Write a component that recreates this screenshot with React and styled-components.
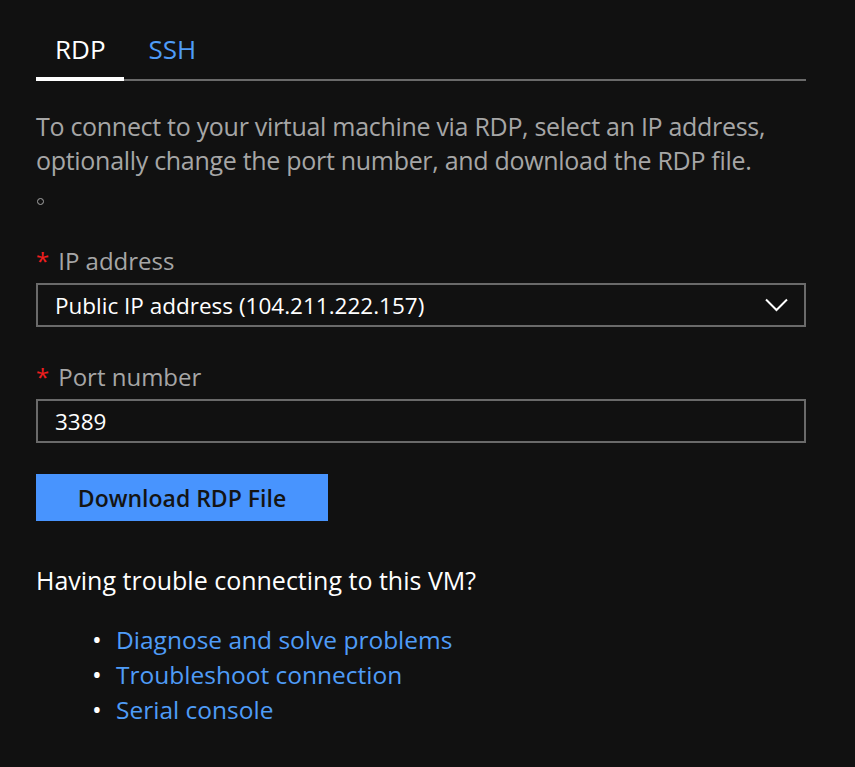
import React, { useState } from 'react'
import styled, { createGlobalStyle } from 'styled-components'

const GlobalStyle = createGlobalStyle`
  html, body {
    margin: 0;
    padding: 0;
    background: #111111;
  }
  body {
    font-family: "Open Sans", "Noto Sans", "Liberation Sans", sans-serif;
  }
`

const Panel = styled.div`
  width: 770px;
  padding: 25px 0 0 36px;
  color: #fff;
  min-height: 742px;
`

const Tabs = styled.div`
  display: flex;
  gap: 6px;
  border-bottom: 2px solid #6a6a6a;
`

const Tab = styled.div`
  font-size: 26px;
  line-height: 36px;
  padding: 6px 18px 10px 19px;
  color: ${p => (p.$active ? '#ffffff' : '#4f9cf7')};
  margin-bottom: -2px;
  border-bottom: 4px solid ${p => (p.$active ? '#ffffff' : 'transparent')};
  cursor: pointer;
`

const Intro = styled.p`
  margin: 28px 0 0;
  font-size: 25px;
  line-height: 34px;
  color: #a6a6a6;
  letter-spacing: -0.3px;
`

const Ring = styled.span`
  display: block;
  width: 5px;
  height: 5px;
  border: 1.5px solid #a6a6a6;
  border-radius: 50%;
  margin: 21px 0 0 1px;
`

const Field = styled.div`
  margin-top: ${p => p.$top || 0}px;
`

const Label = styled.div`
  font-size: 24px;
  color: #a6a6a6;
  line-height: 30px;
  margin-bottom: 7px;
  span {
    color: #f01e1e;
    margin-right: 9px;
  }
`

const Box = styled.div`
  height: 40px;
  border: 2px solid #6a6a6a;
  display: flex;
  align-items: center;
  justify-content: space-between;
  padding: 0 16px 0 17px;
  font-size: 22.5px;
  color: #fff;
`

const Button = styled.button`
  display: block;
  margin-top: 31px;
  width: 292px;
  height: 47px;
  border: none;
  background: #4894fe;
  color: #141414;
  font-family: inherit;
  font-size: 23px;
  font-weight: 600;
  cursor: pointer;
`

const Trouble = styled.div`
  margin-top: 42px;
  font-size: 25px;
  line-height: 34px;
  color: #fff;
`

const Links = styled.ul`
  margin: 25px 0 0;
  padding: 0 0 0 56px;
  list-style: none;
`

const LinkItem = styled.li`
  display: flex;
  font-size: 24.5px;
  line-height: 35px;
  &::before {
    content: '•';
    color: #fff;
    width: 24px;
    font-size: 26px;
  }
  a {
    color: #4f9cf7;
    text-decoration: none;
  }
`

const Chevron = () => (
  <svg width="23" height="14" viewBox="0 0 23 14" fill="none">
    <path d="M1 1.5 L11.5 12 L22 1.5" stroke="#fff" strokeWidth="2" />
  </svg>
)

export default function App() {
  const [tab, setTab] = useState('RDP')
  return (
    <>
      <GlobalStyle />
      <Panel>
        <Tabs>
          <Tab $active={tab === 'RDP'} onClick={() => setTab('RDP')}>RDP</Tab>
          <Tab $active={tab === 'SSH'} onClick={() => setTab('SSH')}>SSH</Tab>
        </Tabs>
        <Intro>
          To connect to your virtual machine via RDP, select an IP address, optionally change the port number, and download the RDP file.
        </Intro>
        <Ring />
        <Field $top={41}>
          <Label><span>*</span>IP address</Label>
          <Box>
            Public IP address (104.211.222.157)
            <Chevron />
          </Box>
        </Field>
        <Field $top={35}>
          <Label><span>*</span>Port number</Label>
          <Box>3389</Box>
        </Field>
        <Button>Download RDP File</Button>
        <Trouble>Having trouble connecting to this VM?</Trouble>
        <Links>
          <LinkItem><a href="#">Diagnose and solve problems</a></LinkItem>
          <LinkItem><a href="#">Troubleshoot connection</a></LinkItem>
          <LinkItem><a href="#">Serial console</a></LinkItem>
        </Links>
      </Panel>
    </>
  )
}
